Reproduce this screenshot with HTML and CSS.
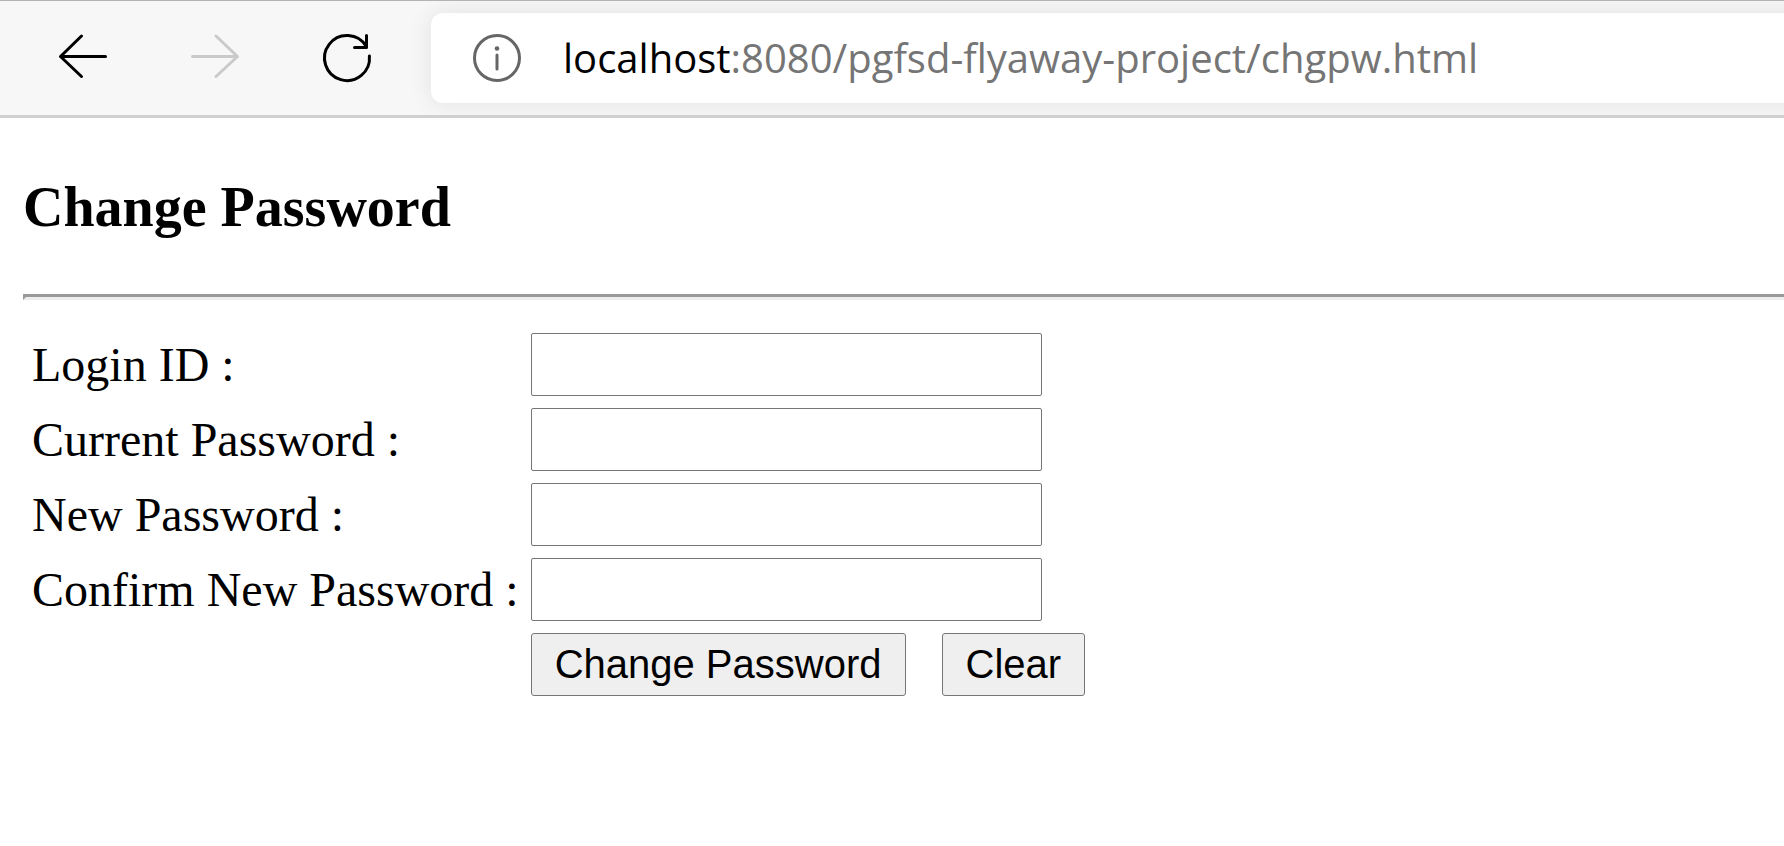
FILE: index.html
```html
<!DOCTYPE html>
<html lang="en">
<head>
<meta charset="utf-8">
<title>Change Password</title>
<link rel="stylesheet" href="styles.css">
</head>
<body>
<header class="toolbar">
  <nav class="nav" aria-label="Browser">
    <button class="nav-button" type="button" aria-label="Back">
      <svg class="icon" viewBox="0 0 48 48"><path d="M46.500 22.500H1.500M22.500 2L1.500 22.500L22.500 42.500"/></svg>
    </button>
    <button class="nav-button" type="button" aria-label="Forward" disabled>
      <svg class="icon" viewBox="0 0 48 48"><path d="M1.500 22.500H46.500M25 2L46.500 22.500L25 42.500"/></svg>
    </button>
    <button class="nav-button" type="button" aria-label="Reload">
      <svg class="icon" viewBox="0 0 48 48"><path d="M46.400 22A22.500 22.500 0 1 1 43.300 12.500M43.500 1.500V13.500H31.500"/></svg>
    </button>
  </nav>
  <div class="address">
    <svg class="icon icon-info" viewBox="0 0 48 48"><circle cx="24" cy="24" r="22.500"/><path d="M24 21V35"/><circle class="dot" cx="24" cy="14.500" r="2.300"/></svg>
    <div class="url" role="textbox" aria-label="Address"><span class="host">localhost</span>:8080/pgfsd-flyaway-project/chgpw.html</div>
  </div>
</header>
<main class="page">
  <h3 class="title">Change Password</h3>
  <hr class="rule">
  <form>
    <table class="form-table">
      <tr><td><label for="login">Login ID :</label></td><td><input class="field" id="login" type="text"></td></tr>
      <tr><td><label for="current">Current Password :</label></td><td><input class="field" id="current" type="password"></td></tr>
      <tr><td><label for="new">New Password :</label></td><td><input class="field" id="new" type="password"></td></tr>
      <tr><td><label for="confirm">Confirm New Password :</label></td><td><input class="field" id="confirm" type="password"></td></tr>
      <tr><td></td><td><div class="actions"><button class="action" type="submit">Change Password</button><button class="action" type="reset">Clear</button></div></td></tr>
    </table>
  </form>
</main>
</body>
</html>
```
FILE: styles.css
```css
body {
  margin: 0;
  background: #fff;
  color: #000;
  font-family: "Liberation Serif", "Times New Roman", serif;
  font-size: 48px;
  overflow-x: hidden;
}

.toolbar {
  display: flex;
  align-items: center;
  gap: 60px;
  padding: 12px 0 12px 59px;
  border-top: 1px solid #b3b3b3;
  border-bottom: 3px solid #d0d0d0;
  background: #f7f7f7;
  overflow: hidden;
}

.nav {
  display: flex;
  gap: 84px;
}

.nav-button {
  display: block;
  padding: 0;
  border: 0;
  background: none;
  color: #000;
}

.nav-button:disabled {
  color: #cacaca;
}

.icon {
  display: block;
  flex: none;
  width: 48px;
  height: 48px;
  overflow: visible;
  fill: none;
  stroke: currentColor;
  stroke-width: 3;
  stroke-linecap: round;
  stroke-linejoin: round;
}

.icon-info {
  color: #666;
}

.dot {
  fill: currentColor;
  stroke: none;
}

.address {
  display: flex;
  flex: 1;
  align-items: center;
  gap: 42px;
  height: 90px;
  margin-right: -24px;
  padding-left: 42px;
  border-radius: 12px 0 0 12px;
  background: #fff;
  box-shadow: 0 0 24px rgba(0, 0, 0, 0.09);
}

.url {
  color: #757575;
  font-family: "Segoe UI", "Open Sans", sans-serif;
  font-size: 40px;
  line-height: 60px;
  white-space: nowrap;
}

.host {
  color: #000;
}

.page {
  padding: 56px 0 24px 23px;
}

.title {
  margin: 0;
  font-size: 56px;
  line-height: 66px;
}

.rule {
  height: 0;
  margin: 54px -6px 24px 0;
  border: 3px solid;
  border-color: #9a9a9a #eee #eee #9a9a9a;
  border-right: 0;
}

.form-table {
  border-spacing: 6px;
}

.form-table td {
  padding: 3px;
}

.field {
  display: block;
  box-sizing: border-box;
  width: 511px;
  height: 63px;
  padding: 3px 6px;
  border: 1px solid #767676;
  border-radius: 2px;
  background: #fff;
  font: 40px "Liberation Sans", Arial, sans-serif;
}

.actions {
  display: flex;
  gap: 36px;
}

.action {
  height: 63px;
  padding: 0 23px;
  border: 1px solid #767676;
  border-radius: 3px;
  background: #efefef;
  color: #000;
  font: 40px "Liberation Sans", Arial, sans-serif;
}
```
